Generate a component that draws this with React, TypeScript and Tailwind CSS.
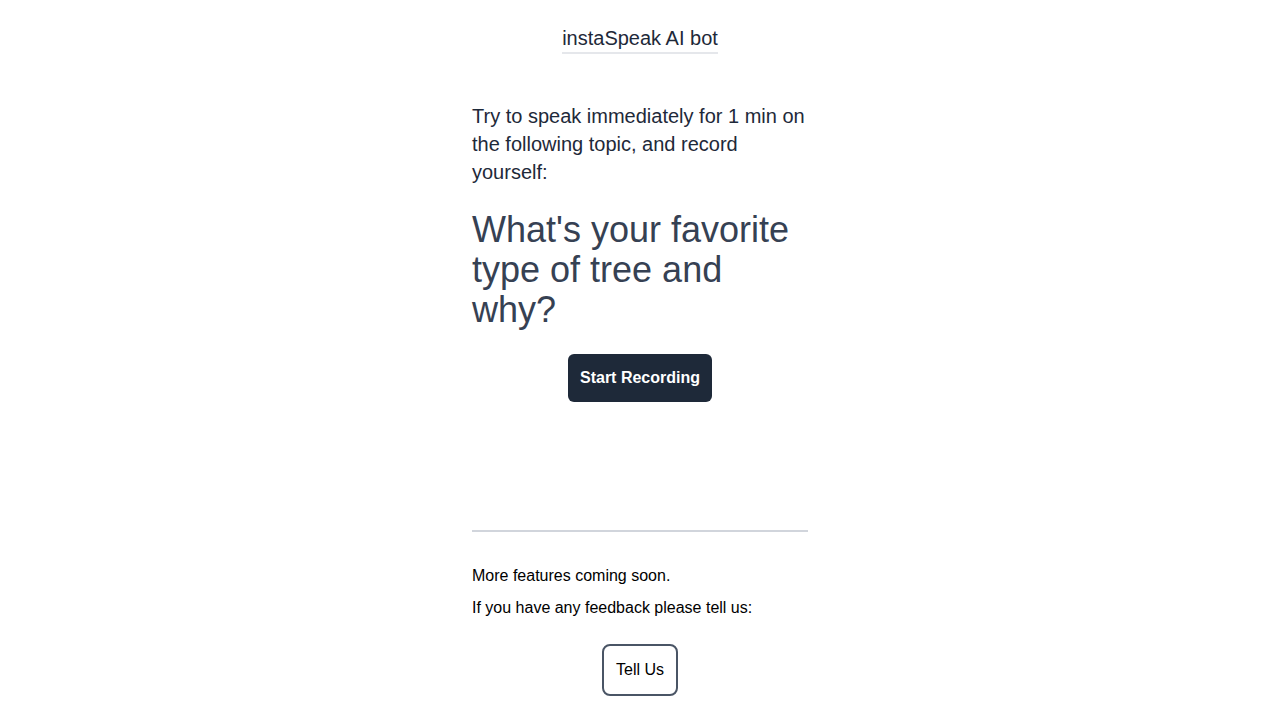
export default function App(): React.ReactElement {
    return (
        <div className="min-h-screen bg-white font-['Liberation_Sans',Arial,sans-serif]">
            <div className="mx-auto w-[336px] pt-6 flex flex-col">
                <div className="flex justify-center">
                    <h1 className="text-xl leading-7 text-gray-800 border-b-2 border-gray-200">
                        instaSpeak AI bot
                    </h1>
                </div>

                <p className="mt-[48px] text-xl leading-7 text-gray-800">
                    Try to speak immediately for 1 min on the following topic, and record yourself:
                </p>

                <h2 className="mt-6 text-[36px] leading-10 text-gray-700">
                    What's your favorite type of tree and why?
                </h2>

                <div className="mt-6 flex justify-center">
                    <button className="h-12 px-3 rounded-md bg-gray-800 text-white font-bold text-base">
                        Start Recording
                    </button>
                </div>

                <hr className="mt-[128px] border-t-2 border-gray-300" />

                <p className="mt-8 text-base leading-6 text-black">More features coming soon.</p>
                <p className="mt-2 text-base leading-6 text-black">
                    If you have any feedback please tell us:
                </p>

                <div className="mt-6 flex justify-center">
                    <button className="px-3 py-3 rounded-lg border-2 border-gray-600 text-base leading-6 text-black">
                        Tell Us
                    </button>
                </div>
            </div>
        </div>
    );
}
